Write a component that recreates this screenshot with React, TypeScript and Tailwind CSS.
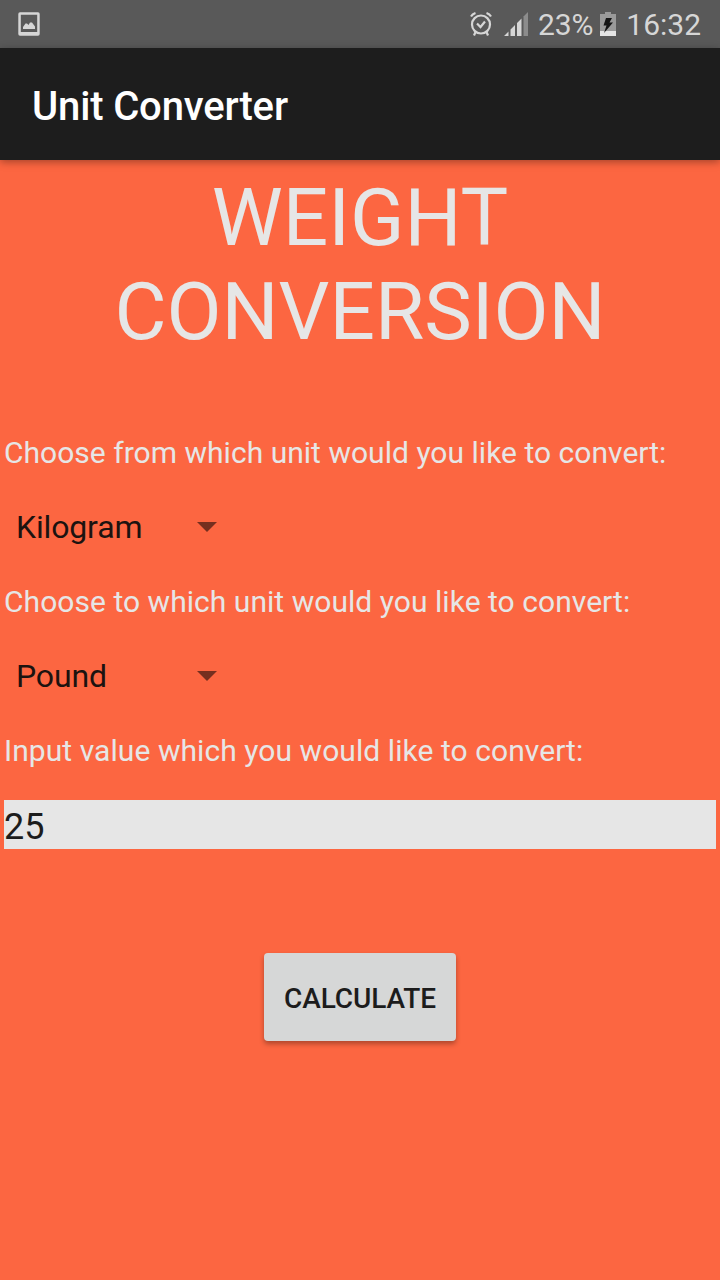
import React from "react";

function Arrow() {
  return (
    <svg width="20" height="10" viewBox="0 0 20 10" className="block">
      <path d="M0 0H20L10 10Z" fill="#762f1f" />
    </svg>
  );
}

function Spinner({ value }: { value: string }) {
  return (
    <div className="flex h-12 w-[217px] items-center justify-between pl-4 text-[32px] tracking-[-0.15px] text-[#1c1310]">
      <span>{value}</span>
      <Arrow />
    </div>
  );
}

export default function App() {
  return (
    <div className="flex h-[1280px] w-[720px] flex-col bg-[#fc6641] font-['Roboto',sans-serif]">
      <div className="flex h-12 items-center justify-between bg-[#595959] pl-[18px] pr-[19px] text-[30px] text-[#d6d6d6]">
        <svg width="22" height="24" viewBox="0 0 22 24">
          <path fillRule="evenodd" d="M2 .3H20Q21.7 .3 21.7 2V22Q21.7 23.7 20 23.7H2Q.3 23.7 .3 22V2Q.3 .3 2 .3ZM2.8 2.8V20H19.2V2.8Z" fill="#d6d6d6" />
          <path d="M5 17V15L7.5 11.5H9L10.5 13L12 10.5H14L17 14.5V17Z" fill="#d6d6d6" />
        </svg>
        <div className="flex items-center">
          <svg width="22" height="24" viewBox="0 0 22 24" fill="none" stroke="#d6d6d6" strokeWidth="2.2">
            <circle cx="11" cy="12.5" r="9" />
            <path d="M1 4.5Q2.5 2 5.5 1M21 4.5Q19.5 2 16.5 1M7 11.5L10.5 15L15 9.5M5.5 20L4 23.5M16.5 20L18 23.5" />
          </svg>
          <svg className="ml-3" width="24" height="24" viewBox="0 0 24 24" fill="#d6d6d6">
            <path d="M0 24L4.5 19.5V24ZM6.5 24V17.5L11 13V24ZM13 24V11L17.5 6.5V24Z" />
            <path d="M19.5 24V4.5L24 0V24Z" fill="#8c8c8c" />
          </svg>
          <span className="ml-[10px] tracking-[-0.1px]">23%</span>
          <svg className="ml-[7px]" width="16" height="24" viewBox="0 0 16 24">
            <path d="M0 2H5V0H11V2H16V24H0Z" fill="#9a9a9a" />
            <path d="M0 19H16V24H0Z" fill="#e5e5e5" />
            <path d="M6 6H12L9.5 10.5H13L4 21L6.5 13.5H3.5Z" fill="#151515" />
          </svg>
          <span className="ml-2.5">16:32</span>
        </div>
      </div>
      <header className="z-10 flex h-28 items-center bg-[#1d1d1d] pl-8 pt-1.5 text-[40px] font-medium tracking-[-0.15px] text-white shadow-[0_2px_8px_rgba(0,0,0,0.35)]">
        Unit Converter
      </header>
      <main className="flex flex-1 flex-col px-1 text-[30px] leading-10 text-[#e6e6e6]">
        <h1 className="mt-[11px] text-center text-[80px] leading-[94px]">
          WEIGHT
          <br />
          CONVERSION
        </h1>
        <p className="mt-[74px] tracking-[0.02px]">Choose from which unit would you like to convert:</p>
        <div className="-ml-1 mt-[30px]"><Spinner value="Kilogram" /></div>
        <p className="mt-[31px] tracking-[0.04px]">Choose to which unit would you like to convert:</p>
        <div className="-ml-1 mt-[30px]"><Spinner value="Pound" /></div>
        <p className="mt-[31px] tracking-[0.06px]">Input value which you would like to convert:</p>
        <input
          aria-label="Value"
          defaultValue="25"
          className="mt-[29px] h-[49px] w-full bg-[#e6e6e6] pt-1 text-[36px] text-[#1c1c1c] outline-none"
        />
        <button className="mt-[104px] h-[88px] w-48 self-center rounded-[4px] bg-[#d6d7d7] pt-1 text-[28px] font-medium tracking-[-0.1px] text-[#1c1c1c] shadow-[0_3px_5px_rgba(0,0,0,0.3)]">
          CALCULATE
        </button>
      </main>
    </div>
  );
}
